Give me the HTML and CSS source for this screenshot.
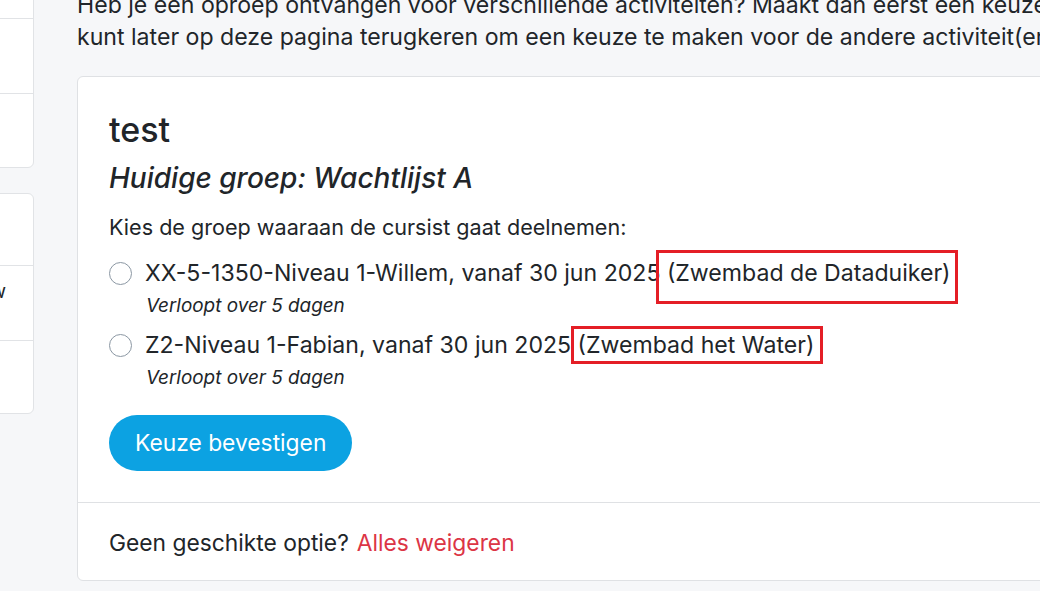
FILE: index.html
```html
<!DOCTYPE html>
<html lang="nl">
<head>
<meta charset="utf-8">
<title>Keuze maken</title>
<link rel="stylesheet" href="styles.css">
</head>
<body>
<div class="layout">
  <aside class="sidebar">
    <ul class="list-group group-top">
      <li class="list-item item-a"></li>
      <li class="list-item item-b"></li>
      <li class="list-item item-c"></li>
    </ul>
    <ul class="list-group group-second">
      <li class="list-item item-d"></li>
      <li class="list-item item-e"><span class="item-text">Overzicht nieuw</span></li>
      <li class="list-item item-f"></li>
    </ul>
  </aside>
  <main class="main">
    <p class="intro">Heb je een oproep ontvangen voor verschillende activiteiten? Maakt dan eerst een keuze voor één activiteit. Je<br>kunt later op deze pagina terugkeren om een keuze te maken voor de andere activiteit(en).</p>
    <section class="card">
      <div class="card-body">
        <h2 class="card-title">test</h2>
        <h3 class="card-subtitle">Huidige groep: Wachtlijst A</h3>
        <p class="prompt">Kies de groep waaraan de cursist gaat deelnemen:</p>
        <div class="option">
          <label class="option-label"><span class="radio"></span><span class="option-text">XX-5-1350-Niveau 1-Willem, vanaf 30 jun 2025 <span class="location loc-a">(Zwembad de Dataduiker)</span></span></label>
          <div class="expiry">Verloopt over 5 dagen</div>
        </div>
        <div class="option">
          <label class="option-label"><span class="radio"></span><span class="option-text">Z2-Niveau 1-Fabian, vanaf 30 jun 2025 <span class="location loc-b">(Zwembad het Water)</span></span></label>
          <div class="expiry">Verloopt over 5 dagen</div>
        </div>
        <button class="btn-confirm" type="button">Keuze bevestigen</button>
      </div>
      <div class="card-footer">
        <span>Geen geschikte optie?</span><a class="decline" href="#">Alles weigeren</a>
      </div>
    </section>
  </main>
</div>
</body>
</html>
```

FILE: styles.css
```css
html, body {
  margin: 0;
  padding: 0;
}
body {
  background: #f6f7f9;
  color: #212529;
  font-family: Inter, "Noto Sans", "Liberation Sans", sans-serif;
  font-size: 22.8px;
  line-height: 1.4;
  overflow: hidden;
  width: 1040px;
  height: 591px;
}
.layout {
  display: flex;
  align-items: flex-start;
  gap: 45px;
}
.sidebar {
  flex: 0 0 32px;
  width: 32px;
  display: flex;
  flex-direction: column;
  gap: 25px;
}
.list-group {
  list-style: none;
  margin: 0 0 0 -208px;
  padding: 0;
  width: 240px;
  background: #fff;
  border: 1px solid #e1e3e6;
  border-radius: 6px;
  overflow: hidden;
}
.group-top {
  margin-top: -40px;
}
.list-item {
  border-bottom: 1px solid #e1e3e6;
  box-sizing: border-box;
  display: flex;
  align-items: center;
  justify-content: flex-end;
  overflow: hidden;
}
.list-item:last-child {
  border-bottom: 0;
}
.item-a { height: 58px; }
.item-b { height: 75px; }
.item-c { height: 73px; }
.item-d { height: 72px; }
.item-e { height: 75px; }
.item-f { height: 72px; }
.item-text {
  white-space: nowrap;
  margin-right: 27px;
  margin-bottom: 22px;
  font-size: 19px;
}
.main {
  flex: 0 0 1000px;
  width: 1000px;
}
.intro {
  margin: -11px 0 23px;
  font-size: 23.1px;
  white-space: nowrap;
  line-height: 32px;
}
.card {
  background: #fff;
  border: 1px solid #dfe1e4;
  border-radius: 6px;
}
.card-body {
  padding: 33px 31px 31px;
}
.card-title {
  margin: 0 0 12px;
  font-size: 34px;
  font-weight: 500;
  line-height: 40px;
}
.card-subtitle {
  margin: 0 0 17px;
  font-size: 28px;
  font-weight: 500;
  font-style: italic;
  line-height: 32px;
}
.prompt {
  margin: 0 0 14px;
  font-size: 21.6px;
  line-height: 32px;
}
.option {
  margin-bottom: 6px;
}
.option-label {
  display: flex;
  align-items: center;
  gap: 13px;
  font-size: 23.1px;
  line-height: 32px;
}
.radio {
  flex: 0 0 auto;
  width: 21px;
  height: 21px;
  border: 1.5px solid #8b97a3;
  border-radius: 50%;
  background: #fff;
}
.option-text {
  white-space: nowrap;
}
.location {
  position: relative;
}
.location::after {
  content: "";
  position: absolute;
  border: 3px solid #e41e26;
  pointer-events: none;
}
.loc-a::after {
  left: -11px;
  right: -7px;
  top: -9px;
  bottom: -17px;
}
.loc-b::after {
  left: -7px;
  right: -9px;
  top: -5px;
  bottom: -5px;
}
.expiry {
  margin-left: 37px;
  font-size: 18.9px;
  font-style: italic;
  line-height: 34px;
}
.btn-confirm {
  display: block;
  margin-top: 20px;
  height: 56px;
  padding: 0 26px;
  border: 0;
  border-radius: 28px;
  background: #0ca2e2;
  color: #fff;
  font-family: inherit;
  font-size: 22.8px;
  line-height: 1;
  cursor: pointer;
}
.card-footer {
  border-top: 1px solid #dfe1e4;
  box-sizing: border-box;
  padding: 3px 31px 0;
  height: 78px;
  display: flex;
  align-items: center;
  gap: 8px;
  white-space: nowrap;
}
.decline {
  color: #dc3545;
  text-decoration: none;
}
```
